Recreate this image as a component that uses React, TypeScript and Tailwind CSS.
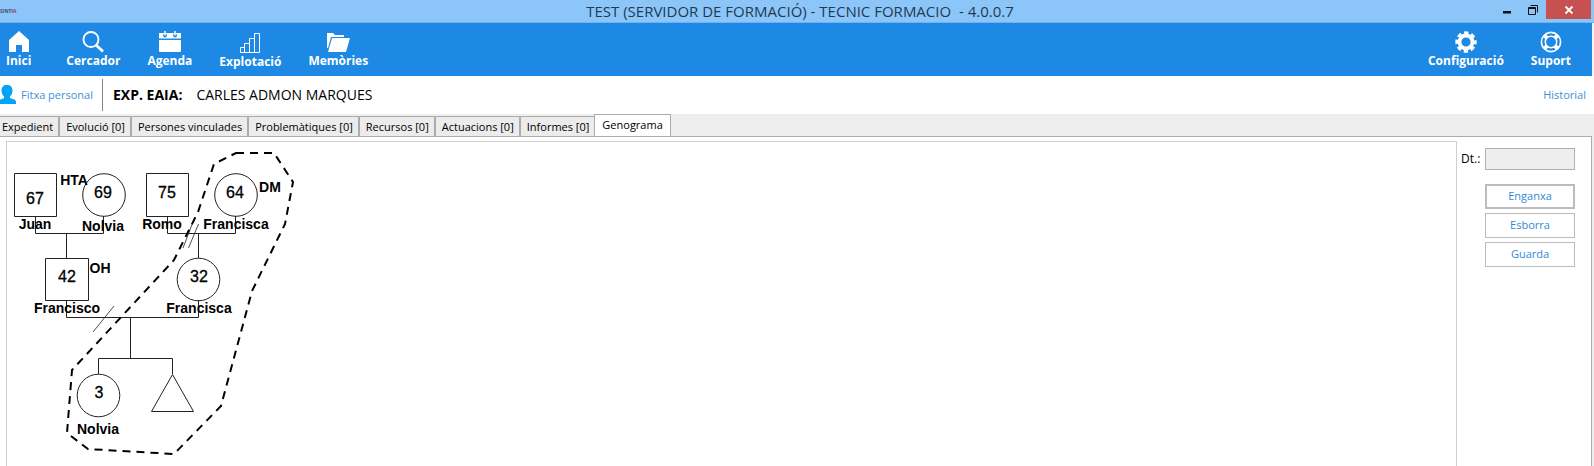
import type { ReactNode } from "react";

const ink = { stroke: "#222", fill: "none", strokeWidth: 1 } as const;

function HomeIcon() {
  return (
    <svg width="22" height="22" viewBox="0 0 22 22" fill="#fff" aria-hidden="true">
      <path d="M11 0 21 9V21H14V14H8V21H1V9Z" />
    </svg>
  );
}
function SearchIcon() {
  return (
    <svg width="22" height="22" viewBox="0 0 22 22" fill="none" stroke="#fff" aria-hidden="true">
      <circle cx="9" cy="8.500" r="7.500" strokeWidth="1.900" />
      <path d="M14 14 21 20.500" strokeWidth="2.800" />
    </svg>
  );
}
function CalendarIcon() {
  return (
    <svg width="22" height="22" viewBox="0 0 22 22" aria-hidden="true">
      <path fill="#fff" d="M0 2H22V7.500H0ZM0 9H22V20Q22 21 21 21H1Q0 21 0 20Z" />
      <circle cx="6" cy="4.500" r="1.900" fill="#1e88e5" />
      <circle cx="16" cy="4.500" r="1.900" fill="#1e88e5" />
      <path stroke="#fff" strokeWidth="1.500" d="M6 0V4.500M16 0V4.500" />
    </svg>
  );
}
function ChartIcon() {
  return (
    <svg width="22" height="22" viewBox="0 0 22 22" fill="none" stroke="#fff" aria-hidden="true">
      <path d="M1.500 15.500H5.500V20.500H1.500ZM5.500 11.500H10.500V20.500H5.500ZM10.500 6.500H15.500V20.500H10.500ZM15.500 1.500H20.500V20.500H15.500Z" />
    </svg>
  );
}
function FolderIcon() {
  return (
    <svg width="24" height="22" viewBox="0 0 24 22" fill="#fff" aria-hidden="true">
      <path d="M1 2H7L9 4H18V6H5L2 17H1Z" />
      <path d="M6 7H24L20 21H2Z" />
    </svg>
  );
}
function GearIcon() {
  return (
    <svg width="22" height="22" viewBox="-11 -11 22 22" fill="none" stroke="#fff" aria-hidden="true">
      <circle r="6.500" strokeWidth="3.800" />
      <circle r="9" strokeWidth="3.400" strokeDasharray="4.200 2.869" strokeDashoffset="2.100" />
    </svg>
  );
}
function SupportIcon() {
  return (
    <svg width="22" height="22" viewBox="-11 -11 22 22" fill="none" stroke="#fff" aria-hidden="true">
      <circle r="9.600" strokeWidth="1.600" />
      <circle r="5.700" strokeWidth="1.500" />
      <path strokeWidth="4" d="M-7-7-4-4M7-7 4-4M-7 7-4 4M7 7 4 4" />
    </svg>
  );
}
function PersonIcon() {
  return (
    <svg width="16" height="20" viewBox="0 0 16 20" fill="#03a4f4" aria-hidden="true">
      <path d="M7 0C10.500 0 12.500 2 12.500 5.500C12.500 8 11.500 10 10 11.500V13C12 14 16 14 16 17V19H0V14.500C2 14 3.500 13.500 4 13V11.500C2.500 10 1.500 8 1.500 5.500C1.500 2 3.500 0 7 0Z" />
    </svg>
  );
}

function Tool({ icon, label, className = "" }: { icon: ReactNode; label: string; className?: string }) {
  return (
    <button className={`flex flex-col items-center text-xs leading-4 font-bold text-white ${className}`}>
      {icon}
      <span>{label}</span>
    </button>
  );
}

const tabs = [
  "Expedient",
  "Evolució [0]",
  "Persones vinculades",
  "Problemàtiques [0]",
  "Recursos [0]",
  "Actuacions [0]",
  "Informes [0]",
];

const ages: [number, number, string][] = [
  [35, 62, "67"],
  [103, 56, "69"],
  [167, 56, "75"],
  [235, 56, "64"],
  [67, 140, "42"],
  [199, 140, "32"],
  [99, 256, "3"],
];

const names: [number, number, string][] = [
  [35, 87, "Juan"],
  [103, 89, "Nolvia"],
  [162, 87, "Romo"],
  [236, 87, "Francisca"],
  [67, 171, "Francisco"],
  [199, 171, "Francisca"],
  [98, 292, "Nolvia"],
  [74, 43, "HTA"],
  [270, 50, "DM"],
  [100, 131, "OH"],
];

function Genogram() {
  return (
    <svg className="-ml-[7px]" width="310" height="324" viewBox="0 0 310 324" role="img" aria-label="Genograma">
      <g {...ink}>
        <path d="M14.500 31.500H56.500V74.500H14.500ZM146.500 31.500H188.500V74.500H146.500ZM45.500 116.500H88.500V158.500H45.500Z" />
        <circle cx="104" cy="53" r="21.300" />
        <circle cx="236" cy="53" r="21.300" />
        <circle cx="198.500" cy="137.500" r="21.300" />
        <circle cx="98.500" cy="253.500" r="21.300" />
        <path d="M35.500 74V91.500H103.500V74M66.500 91V116M167.500 74V91.500H235.500V74M198.500 91V116M66.500 158V175.500H198.500V158M130.500 175V216.500M98.500 232V216.500H172.500V232" />
        <path d="M172.500 232.500 193.500 269.500H151.500Z" />
        <path strokeWidth="0.800" d="M193 80 183 106M198.500 82 188.500 106M114 164 93 190" />
      </g>
      <path
        d="M236 11H274L293 40L285 82L252 149L221 264L174 312L88 307L67 291L72 228L174 118L198 70L214 22Z"
        fill="none"
        stroke="#000"
        strokeWidth="2"
        strokeDasharray="8 6"
      />
      <g fontSize="16" textAnchor="middle" fill="#000" stroke="#000" strokeWidth="0.300" className="font-['Liberation_Sans',sans-serif]">
        {ages.map(([x, y, t]) => (
          <text key={t} x={x} y={y}>{t}</text>
        ))}
      </g>
      <g fontSize="14" fontWeight="700" textAnchor="middle" fill="#000" className="font-['Liberation_Sans',sans-serif]">
        {names.map(([x, y, t]) => (
          <text key={`${x}-${y}`} x={x} y={y}>{t}</text>
        ))}
      </g>
    </svg>
  );
}

export default function App() {
  return (
    <div className="flex min-h-screen flex-col bg-[#eeeeee] font-['Open_Sans',sans-serif] text-[11px] text-black">
      <header className="flex h-[23px] items-start border-b border-[#6fb2ee] bg-[#8cc6f9]">
        <span className="w-36 pt-2 text-[5px] leading-[6px] font-bold text-[#4a4a78]">
          SINTI<span className="text-[#b03050]">A</span>
        </span>
        <h1 className="flex-1 pl-[6px] text-center text-[15px] leading-[23px] whitespace-pre text-[#1f3a52]">
          TEST (SERVIDOR DE FORMACIÓ) - TECNIC FORMACIO  - 4.0.0.7
        </h1>
        <div className="flex w-36 justify-end pr-[3px]">
          <button aria-label="Minimitza" className="flex h-[19px] w-[26px] items-center justify-center">
            <svg width="10" height="10" viewBox="0 0 10 10"><path d="M1 6H9V8.500H1Z" fill="#111" /></svg>
          </button>
          <button aria-label="Restaura" className="flex h-[19px] w-[26px] items-center justify-center">
            <svg width="10" height="10" viewBox="0 0 10 10" fill="none" stroke="#111"><path d="M0.500 2.500H7.500V9.500H0.500ZM0 3.500H8M2.500 0.500H9.500V7.500" /></svg>
          </button>
          <button aria-label="Tanca" className="flex h-[19px] w-[45px] items-center justify-center bg-[#c75050]">
            <svg width="10" height="10" viewBox="0 0 10 10" stroke="#fff" strokeWidth="1.800"><path d="M1.500 1.500 8.500 8.500M8.500 1.500 1.500 8.500" /></svg>
          </button>
        </div>
      </header>

      <nav className="flex h-[53px] items-start justify-between border-r-2 border-[#f4f4f4] bg-[#1e88e5] pt-2 pr-[21px] pl-[6px]">
        <div className="flex gap-[27px]">
          <Tool icon={<HomeIcon />} label="Inici" className="mr-2" />
          <Tool icon={<SearchIcon />} label="Cercador" />
          <Tool icon={<CalendarIcon />} label="Agenda" />
          <Tool icon={<ChartIcon />} label="Explotació" className="pt-px" />
          <Tool icon={<FolderIcon />} label="Memòries" />
        </div>
        <div className="flex gap-[27px]">
          <Tool icon={<GearIcon />} label="Configuració" />
          <Tool icon={<SupportIcon />} label="Suport" />
        </div>
      </nav>

      <section className="flex h-[38px] items-center bg-white pr-2">
        <a href="#fitxa" className="flex items-center gap-[5px] text-[#4292d6]">
          <PersonIcon />
          Fitxa personal
        </a>
        <div className="mr-[10px] ml-[9px] h-8 w-px bg-[#888]" />
        <b className="text-sm">EXP. EAIA:</b>
        <span className="ml-[14px] text-sm">CARLES ADMON MARQUES</span>
        <a href="#historial" className="ml-auto text-[#4292d6]">Historial</a>
      </section>

      <div role="tablist" className="flex h-[22px] items-end">
        {tabs.map((t) => (
          <button key={t} role="tab" aria-selected="false" className="h-5 border-t border-r-2 border-[#acacac] bg-[#ececec] pt-px pr-[5px] pl-[6px] leading-[18px] first:pl-[2px]">
            {t}
          </button>
        ))}
        <button role="tab" aria-selected="true" className="-mb-px -ml-[2px] h-[23px] border border-b-0 border-[#acacac] bg-white px-[7px] pb-[3px] leading-4">
          Genograma
        </button>
      </div>

      <main className="mr-[2px] flex flex-1 border-t border-r border-[#acacac] bg-white pt-1 pl-[6px]">
        <div className="flex-1 border border-b-0 border-[#d0d0d0]">
          <Genogram />
        </div>
        <aside className="flex w-[134px] flex-col pt-[7px] pr-4 pl-1">
          <label className="mb-[14px] flex items-center justify-between text-xs">
            Dt.:
            <input readOnly className="h-[22px] w-[90px] border border-[#b0b0b0] bg-[#eeeeee]" />
          </label>
          <div className="flex flex-col items-end gap-1 text-[#2f8ad8]">
            <button className="h-[25px] w-[90px] border-2 border-[#bcbcbc]">Enganxa</button>
            <button className="h-[25px] w-[90px] border border-[#bcbcbc]">Esborra</button>
            <button className="h-[25px] w-[90px] border border-[#bcbcbc]">Guarda</button>
          </div>
        </aside>
      </main>
    </div>
  );
}
